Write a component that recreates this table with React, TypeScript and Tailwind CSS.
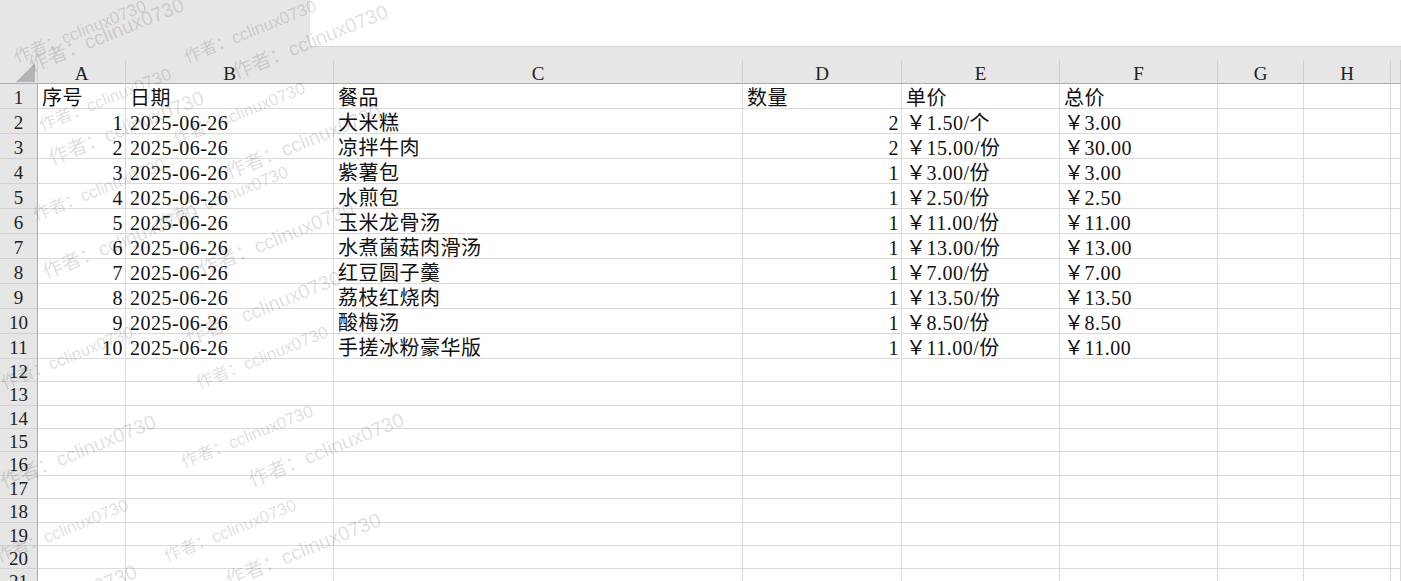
import React from "react";

const cols = ["A", "B", "C", "D", "E", "F", "G", "H", ""];

type Row = [string, string, string, string, string, string];

const data: Row[] = [
  ["序号", "日期", "餐品", "数量", "单价", "总价"],
  ["1", "2025-06-26", "大米糕", "2", "￥1.50/个", "￥3.00"],
  ["2", "2025-06-26", "凉拌牛肉", "2", "￥15.00/份", "￥30.00"],
  ["3", "2025-06-26", "紫薯包", "1", "￥3.00/份", "￥3.00"],
  ["4", "2025-06-26", "水煎包", "1", "￥2.50/份", "￥2.50"],
  ["5", "2025-06-26", "玉米龙骨汤", "1", "￥11.00/份", "￥11.00"],
  ["6", "2025-06-26", "水煮菌菇肉滑汤", "1", "￥13.00/份", "￥13.00"],
  ["7", "2025-06-26", "红豆圆子羹", "1", "￥7.00/份", "￥7.00"],
  ["8", "2025-06-26", "荔枝红烧肉", "1", "￥13.50/份", "￥13.50"],
  ["9", "2025-06-26", "酸梅汤", "1", "￥8.50/份", "￥8.50"],
  ["10", "2025-06-26", "手搓冰粉豪华版", "1", "￥11.00/份", "￥11.00"],
];

// heights of the empty rows 12..21
const emptyRows = [
  { n: 12, h: "h-[23px]" },
  { n: 13, h: "h-[24px]" },
  { n: 14, h: "h-[23px]" },
  { n: 15, h: "h-[23px]" },
  { n: 16, h: "h-[24px]" },
  { n: 17, h: "h-[23px]" },
  { n: 18, h: "h-[24px]" },
  { n: 19, h: "h-[23px]" },
  { n: 20, h: "h-[23px]" },
  { n: 21, h: "h-[24px]" },
];

const watermarks = [
  "left-[18px] top-[49px] text-[17px]",
  "left-[188px] top-[49px] text-[17px]",
  "left-[43px] top-[117px] text-[17px]",
  "left-[177px] top-[131px] text-[17px]",
  "left-[37px] top-[207px] text-[17px]",
  "left-[160px] top-[215px] text-[17px]",
  "left-[5px] top-[375px] text-[17px]",
  "left-[200px] top-[375px] text-[17px]",
  "left-[185px] top-[454px] text-[17px]",
  "left-[0px] top-[548px] text-[17px]",
  "left-[168px] top-[548px] text-[17px]",
  "left-[33px] top-[55px] text-[20px]",
  "left-[237px] top-[62px] text-[20px]",
  "left-[53px] top-[148px] text-[20px]",
  "left-[230px] top-[162px] text-[20px]",
  "left-[47px] top-[262px] text-[20px]",
  "left-[203px] top-[259px] text-[20px]",
  "left-[190px] top-[328px] text-[20px]",
  "left-[5px] top-[472px] text-[20px]",
  "left-[253px] top-[470px] text-[20px]",
  "left-[230px] top-[570px] text-[20px]",
  "left-[-14px] top-[622px] text-[20px]",
];

const grid =
  "grid grid-cols-[38px_88px_208px_409px_159px_158px_158px_86px_87px_1fr]";

const cellFont = "font-['Liberation_Serif','Noto_Sans_CJK_SC',serif]";

function RowHead({ n, h }: { n: number; h: string }) {
  return (
    <div
      className={`${h} flex items-center justify-center border-b border-r border-b-[#d2d2d2] border-r-[#ababab] bg-[#e6e6e6] pt-[2px] text-[19px] leading-none text-[#222]`}
    >
      {n}
    </div>
  );
}

function Cell({
  text,
  right,
  h,
}: {
  text?: string;
  right?: boolean;
  h: string;
}) {
  return (
    <div
      className={`${h} flex items-center overflow-visible whitespace-nowrap border-b border-r border-[#dadada] bg-white pt-[3px] text-[20px] leading-none tracking-[0.5px] text-[#111] ${
        right ? "justify-end pr-[2px]" : "pl-[4px]"
      }`}
    >
      {text}
    </div>
  );
}

export default function App() {
  return (
    <div className={`relative h-[581px] w-[1401px] overflow-hidden bg-white ${cellFont}`}>
      <div className="flex h-[47px]">
        <div className="w-[310px] bg-[#e6e6e6]" />
        <div className="flex-1 border-b border-[#d6d6d6] bg-white" />
      </div>

      <div className="bg-[#e6e6e6]">
        <div className="h-[13px]" />
        <div className={grid}>
          <div className="flex h-[24px] items-end justify-end border-b border-r border-b-[#ababab] border-r-[#cfcfcf] pb-[1px] pr-[2px]">
            <svg width="19" height="19" viewBox="0 0 19 19">
              <polygon points="19,0 19,19 0,19" fill="#b4b4b4" />
            </svg>
          </div>
          {cols.map((c, i) => (
            <div
              key={i}
              className="flex h-[24px] items-center justify-center border-b border-r border-b-[#ababab] border-r-[#cfcfcf] pt-[3px] text-[19px] leading-none text-[#222]"
            >
              {c}
            </div>
          ))}
        </div>
      </div>

      <div className={grid}>
        {data.map((r, i) => (
          <React.Fragment key={i}>
            <RowHead n={i + 1} h="h-[25px]" />
            <Cell h="h-[25px]" text={r[0]} right={i > 0} />
            <Cell h="h-[25px]" text={r[1]} />
            <Cell h="h-[25px]" text={r[2]} />
            <Cell h="h-[25px]" text={r[3]} right={i > 0} />
            <Cell h="h-[25px]" text={r[4]} />
            <Cell h="h-[25px]" text={r[5]} />
            <Cell h="h-[25px]" />
            <Cell h="h-[25px]" />
            <Cell h="h-[25px]" />
          </React.Fragment>
        ))}
        {emptyRows.map((r) => (
          <React.Fragment key={r.n}>
            <RowHead n={r.n} h={r.h} />
            {cols.map((c, i) => (
              <Cell key={i} h={r.h} />
            ))}
          </React.Fragment>
        ))}
      </div>

      {/* watermark overlay */}
      <div className="pointer-events-none absolute inset-0">
        {watermarks.map((w, i) => (
          <span
            key={i}
            className={`absolute ${w} origin-bottom-left -rotate-[22deg] whitespace-nowrap font-['Liberation_Sans','Noto_Sans_CJK_SC',sans-serif] leading-none text-black/[0.14]`}
          >
            作者：cclinux0730
          </span>
        ))}
      </div>
    </div>
  );
}
